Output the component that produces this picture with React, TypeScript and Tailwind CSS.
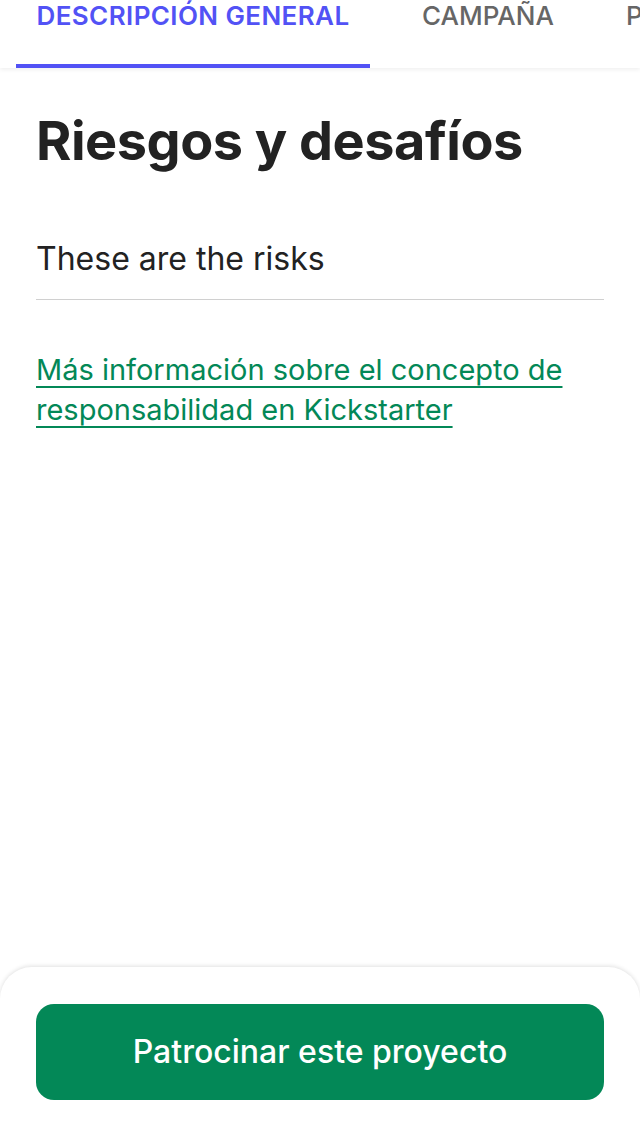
export default function App() {
  return (
    <div className="relative h-[1136px] w-[640px] overflow-hidden bg-white font-['Inter',sans-serif] text-[#222]">
      {/* tabs */}
      <div className="relative h-[68px] bg-white shadow-[0_2px_4px_rgba(0,0,0,0.06)]">
        <div className="flex items-start whitespace-nowrap leading-[32px]">
          <div className="ml-4 flex w-[354px] shrink-0 justify-center">
            <span className="text-[26px] font-semibold tracking-[0.4px] text-[#5252f5]">DESCRIPCIÓN GENERAL</span>
          </div>
          <span className="ml-[52px] text-[26px] font-medium text-[#666]">CAMPAÑA</span>
          <span className="ml-[72px] text-[26px] font-medium text-[#666]">P</span>
        </div>
        <div className="absolute bottom-0 left-4 h-[4px] w-[354px] bg-[#5252f5]" />
      </div>

      <div className="px-9">
        <h1 className="mt-[43px] text-[54px] font-bold leading-[60px] tracking-[-0.5px] text-[#222]">Riesgos y desafíos</h1>
        <p className="mt-[68px] text-[32px] leading-[40px] text-[#222]">These are the risks</p>
        <div className="mt-[20px] h-px bg-[#d0d0d0]" />
        <a href="#" className="mt-[50px] block text-[29px] leading-[40px] text-[#038857] underline decoration-2 underline-offset-[6px]">
          Más información sobre el concepto de responsabilidad en Kickstarter
        </a>
      </div>

      {/* bottom bar */}
      <div className="absolute bottom-0 left-0 right-0 h-[169px] rounded-t-[32px] bg-white px-9 pt-[37px] shadow-[0_-1px_4px_rgba(0,0,0,0.12)]">
        <button className="flex h-[96px] w-full items-center justify-center rounded-[18px] bg-[#038857] text-[32px] font-medium text-white">
          Patrocinar este proyecto
        </button>
      </div>
    </div>
  );
}
